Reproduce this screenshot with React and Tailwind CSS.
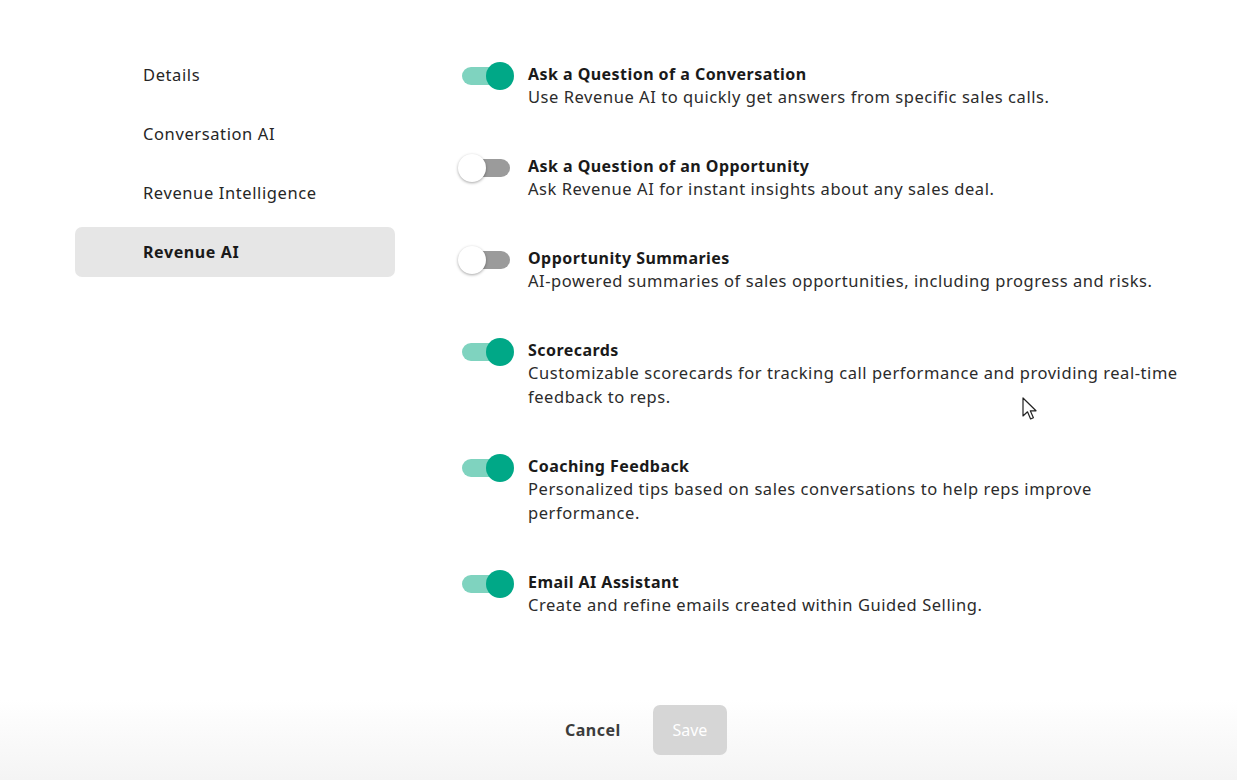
import { useState } from 'react'

const NAV = ['Details', 'Conversation AI', 'Revenue Intelligence', 'Revenue AI']

const FEATURES = [
  { title: 'Ask a Question of a Conversation', desc: 'Use Revenue AI to quickly get answers from specific sales calls.', on: true },
  { title: 'Ask a Question of an Opportunity', desc: 'Ask Revenue AI for instant insights about any sales deal.', on: false },
  { title: 'Opportunity Summaries', desc: 'AI-powered summaries of sales opportunities, including progress and risks.', on: false },
  { title: 'Scorecards', desc: 'Customizable scorecards for tracking call performance and providing real-time feedback to reps.', on: true },
  { title: 'Coaching Feedback', desc: 'Personalized tips based on sales conversations to help reps improve performance.', on: true },
  { title: 'Email AI Assistant', desc: 'Create and refine emails created within Guided Selling.', on: true },
]

function Toggle({ on, onClick }) {
  return (
    <button onClick={onClick} className="relative w-[56px] h-[28px] shrink-0">
      <span className={`absolute left-[4px] top-[5px] w-[48px] h-[18px] rounded-full ${on ? 'bg-[#7fd3bf]' : 'bg-[#9b9b9b]'}`} />
      <span
        className={`absolute top-0 w-[28px] h-[28px] rounded-full ${on ? 'left-[28px] bg-[#00a887]' : 'left-0 bg-white shadow-[0_1px_3px_rgba(0,0,0,0.35)]'}`}
      />
    </button>
  )
}

export default function App() {
  const [flags, setFlags] = useState(FEATURES.map(f => f.on))
  const active = 'Revenue AI'

  return (
    <div className="relative w-[1237px] h-[780px] bg-white overflow-hidden text-[#262626]" style={{ fontFamily: '"Noto Sans", "Open Sans", sans-serif' }}>
      <div className="flex h-[700px]">
        {/* Sidebar */}
        <nav className="w-[458px] shrink-0 pl-[75px] pt-[50px]">
          <div className="w-[320px] flex flex-col gap-[9px]">
            {NAV.map(n => (
              <div
                key={n}
                className={`h-[50px] rounded-[7px] pl-[68px] flex items-center text-[16.5px] tracking-[0.6px] ${n === active ? 'bg-[#e6e6e6] font-bold text-[#1a1a1a] text-[16px] tracking-[0.6px]' : ''}`}
              >
                {n}
              </div>
            ))}
          </div>
        </nav>

        {/* Features */}
        <div className="flex-1 pt-[64px] pr-[40px] flex flex-col gap-[47px]">
          {FEATURES.map((f, i) => (
            <div key={f.title} className="flex">
              <div className="w-[70px] shrink-0 -mt-[2px]">
                <Toggle on={flags[i]} onClick={() => setFlags(s => s.map((v, j) => (j === i ? !v : v)))} />
              </div>
              <div className="max-w-[670px]">
                <div className="font-bold text-[16px] leading-[21px] tracking-[0.45px] text-[#1a1a1a]">{f.title}</div>
                <div className="text-[16.5px] leading-[24px] tracking-[0.55px] text-[#2b2b2b]">{f.desc}</div>
              </div>
            </div>
          ))}
        </div>
      </div>

      {/* Footer */}
      <div className="h-[80px] pb-[20px] bg-gradient-to-b from-white to-[#f4f4f4] flex items-center pl-[565px] gap-[32px]">
        <button className="text-[16px] tracking-[0.5px] font-bold text-[#3c3c3c]">Cancel</button>
        <button className="w-[74px] h-[50px] rounded-[7px] bg-[#d6d6d6] text-white text-[16px]">Save</button>
      </div>

      {/* Mouse cursor */}
      <svg className="absolute left-[1022px] top-[397px]" width="16" height="26" viewBox="0 0 16 26">
        <path d="M1 1 L1 19 L5.5 14.8 L8.6 22 L11.4 20.8 L8.3 13.8 L14 13.8 Z" fill="white" stroke="#222" strokeWidth="1.2" strokeLinejoin="round" />
      </svg>
    </div>
  )
}
